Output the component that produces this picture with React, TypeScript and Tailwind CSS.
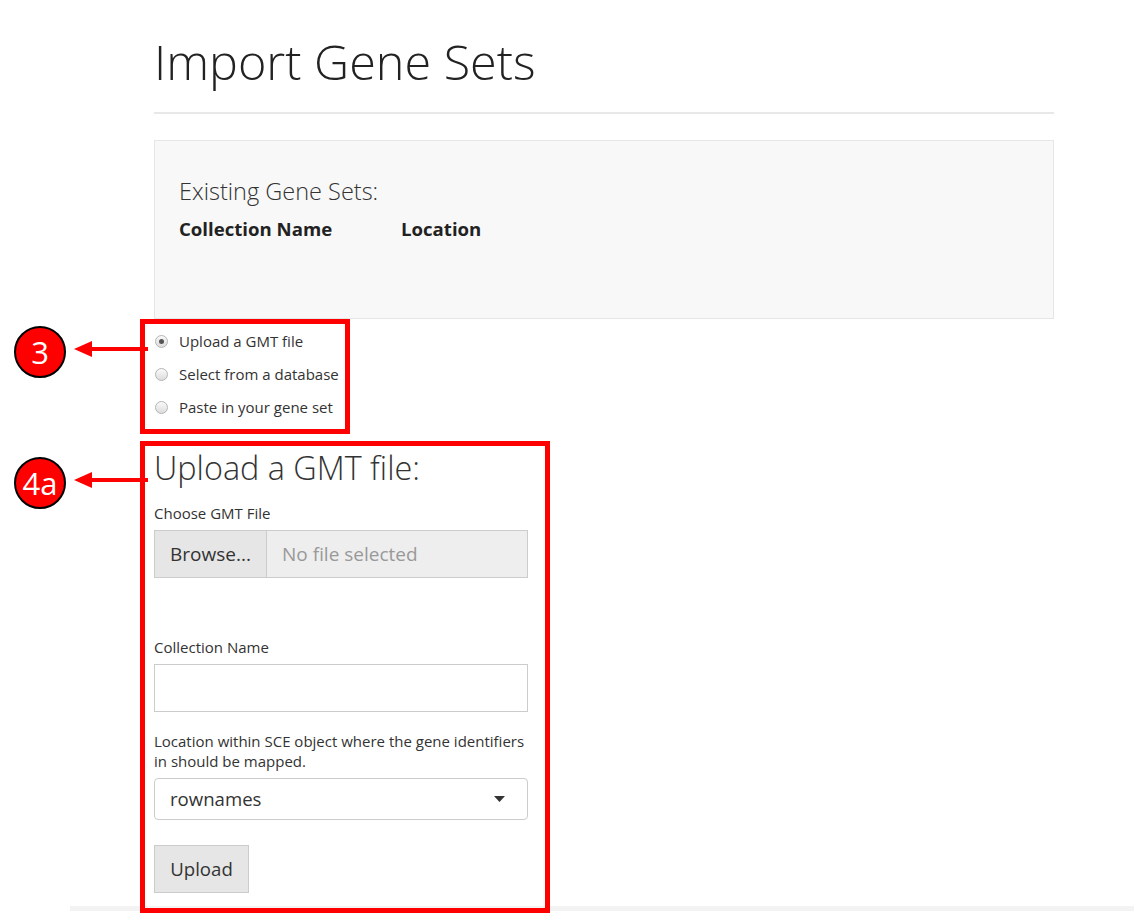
import React from 'react';

const radioOptions = ['Upload a GMT file', 'Select from a database', 'Paste in your gene set'];

function Badge({ label, top }: { label: string; top: number }) {
  return (
    <div className="absolute left-0" style={{ top }}>
      <div className="flex items-center">
        <div className="ml-[14px] flex h-[52px] w-[52px] items-center justify-center rounded-full border-2 border-black bg-[#ff0000] text-[31px] leading-none text-white">
          {label}
        </div>
        <svg width="74" height="20" viewBox="0 0 74 20" className="ml-[8px] -mt-[6px]">
          <polygon points="0,10 18,2 18,18" fill="#ff0000" />
          <rect x="16" y="8" width="58" height="4" fill="#ff0000" />
        </svg>
      </div>
    </div>
  );
}

function Radio({ checked }: { checked: boolean }) {
  return (
    <span className="flex h-[13px] w-[13px] items-center justify-center rounded-full border border-[#b5b5b5] bg-gradient-to-b from-[#fafafa] to-[#dcdcdc]">
      {checked && <span className="h-[5px] w-[5px] rounded-full bg-[#555]" />}
    </span>
  );
}

function App() {
  return (
    <div className="relative h-[914px] overflow-hidden bg-white font-['Open_Sans',sans-serif] text-[#333]">
      <div className="absolute left-[70px] right-0 top-[906px] h-[5px] bg-[#f3f3f3]" />

      <div className="ml-[154px] w-[900px]">
        <h1 className="pt-[33px] text-[48.5px] font-light leading-[57px] text-[#222]">Import Gene Sets</h1>
        <div className="mt-[22px] h-[2px] bg-[#e8e8e8]" />

        <div className="mt-[26px] h-[179px] border border-[#e6e6e6] bg-[#f8f8f8] px-[24px] pt-[36px]">
          <div className="text-[23.5px] font-light leading-[28px]">Existing Gene Sets:</div>
          <div className="mt-[11px] grid grid-cols-[222px_1fr] text-[18.6px] font-bold leading-[25px] text-[#222]">
            <span>Collection Name</span>
            <span>Location</span>
          </div>
        </div>
      </div>

      <div className="relative ml-[140px] h-[115px] w-[210px] border-[5px] border-[#ff0000] pl-[10px] pt-[1px]">
        {radioOptions.map((opt, i) => (
          <label key={opt} className="flex h-[33px] items-center gap-[11px] text-[15px]">
            <Radio checked={i === 0} />
            <span>{opt}</span>
          </label>
        ))}
      </div>

      <div className="relative ml-[140px] mt-[7px] h-[472px] w-[410px] border-[5px] border-[#ff0000] pl-[9px] pr-[17px] pt-[4px]">
        <h3 className="text-[32.4px] font-light leading-[35px]">Upload a GMT file:</h3>

        <div className="mt-[18px] text-[15px] leading-[20px]">Choose GMT File</div>
        <div className="mt-[7px] flex h-[48px] text-[19px]">
          <div className="flex w-[113px] items-center justify-center border border-[#cccccc] bg-[#e6e6e6]">Browse...</div>
          <div className="flex flex-1 items-center border border-l-0 border-[#cccccc] bg-[#eeeeee] pl-[15px] text-[#999]">
            No file selected
          </div>
        </div>

        <div className="mt-[59px] text-[15px] leading-[20px]">Collection Name</div>
        <div className="mt-[7px] h-[48px] border border-[#cccccc] bg-white" />

        <div className="mt-[19px] text-[15px] leading-[20px]">
          Location within SCE object where the gene identifiers in should be mapped.
        </div>
        <div className="mt-[7px] flex h-[42px] items-center justify-between rounded-[4px] border border-[#cccccc] bg-white pl-[15px] pr-[22px] text-[18.6px]">
          <span>rownames</span>
          <svg width="11" height="6" viewBox="0 0 11 6">
            <polygon points="0,0 11,0 5.5,6" fill="#333" />
          </svg>
        </div>

        <div className="mt-[25px] flex h-[48px] w-[95px] items-center justify-center border border-[#cccccc] bg-[#e6e6e6] text-[18.6px]">
          Upload
        </div>
      </div>

      <Badge label="3" top={326} />
      <Badge label="4a" top={457} />
    </div>
  );
}

export default App;
